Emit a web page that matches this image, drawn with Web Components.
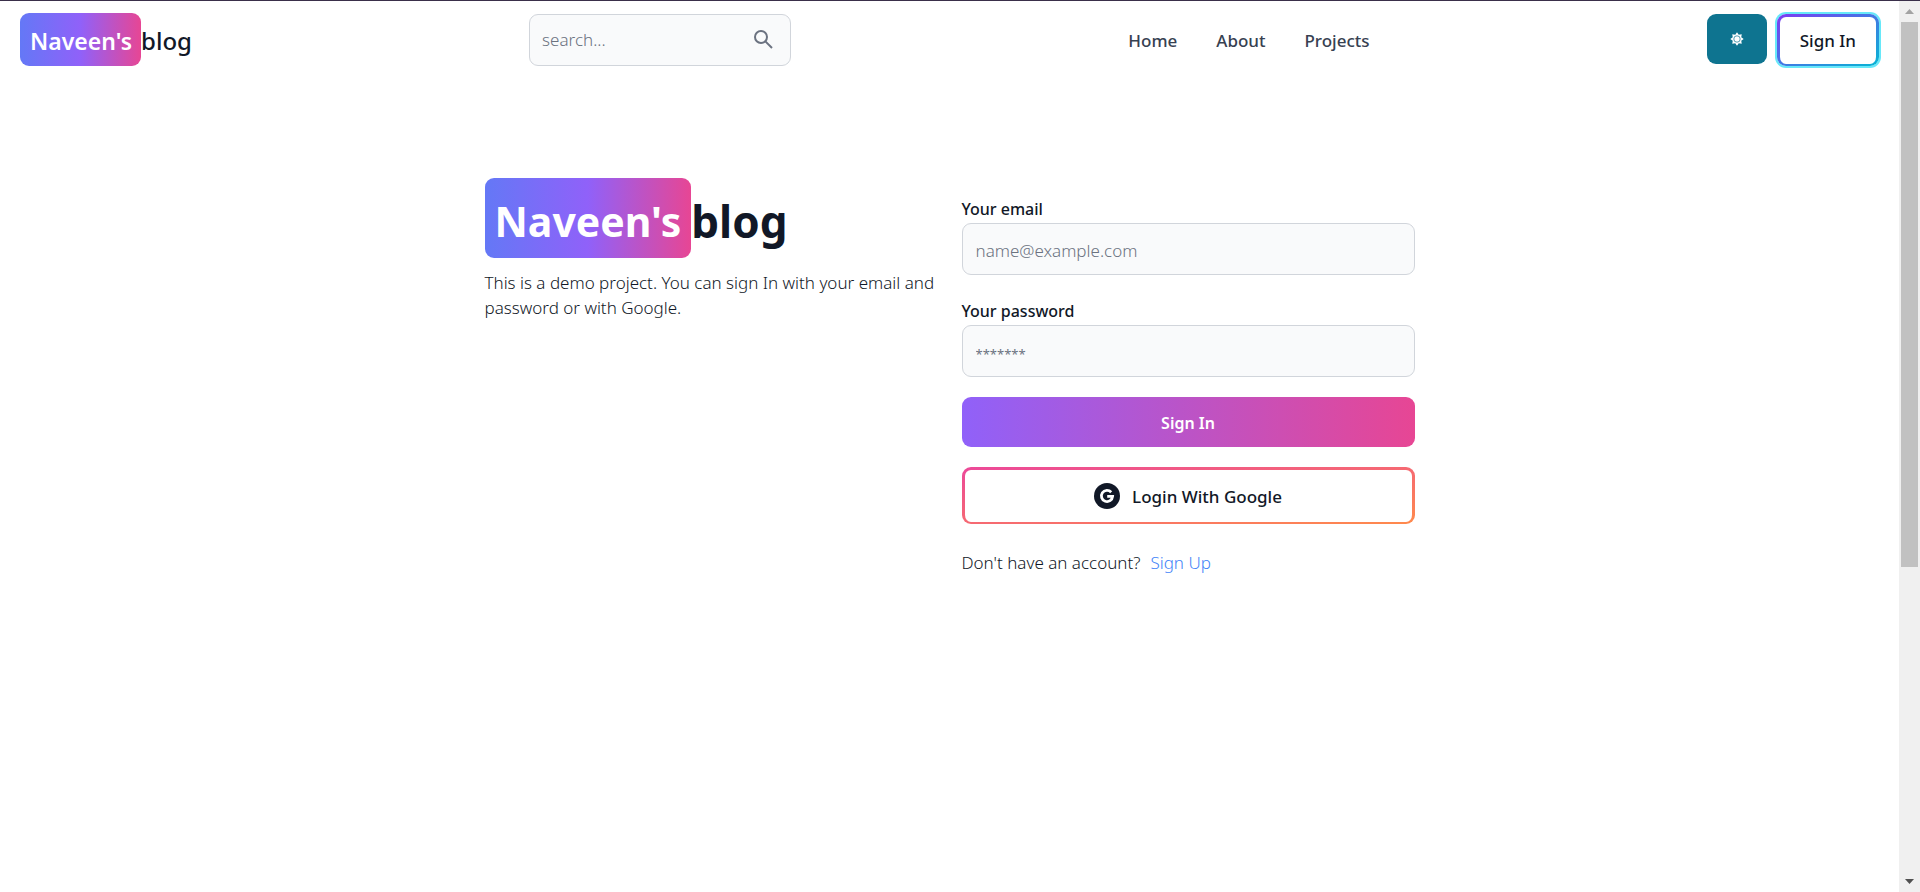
<!DOCTYPE html>
<html lang="en">
<head>
<meta charset="utf-8">
<title>Naveen's blog</title>
<style>
  html, body { margin: 0; }
  body { font: 300 17px/25px "Noto Sans", "Open Sans", sans-serif; color: #111827; background: #fff; }
</style>
</head>
<body>
<blog-page></blog-page>
<script>
const BASE = `*, *::before, *::after { box-sizing: border-box; } a { color: inherit; text-decoration: none; } button, input { font: inherit; color: inherit; margin: 0; } button { cursor: pointer; }`;

function define(name, css, html, setup) {
  customElements.define(name, class extends HTMLElement {
    constructor() {
      super();
      const root = this.attachShadow({ mode: 'open' });
      root.innerHTML = `<style>${BASE}${css}</style>${html}`;
    }
    connectedCallback() {
      if (setup) setup(this.shadowRoot, this);
    }
  });
}

define('blog-logo', `
  :host { display: block; font-size: 24px; line-height: 32px; font-weight: 500; white-space: nowrap; }
  a { display: flex; align-items: stretch; width: max-content; }
  span { padding: 12px 0 9px; }
  .tag { padding-left: 10px; padding-right: 9px; border-radius: 9px; color: #fff; font-size: 23px; font-weight: 600;
    background: linear-gradient(to right, #6478f6, #9061f9, #e74694); }
  :host([large]) { font-size: 44px; line-height: 60px; font-weight: 700; }
  :host([large]) .tag { padding-right: 10px; font-size: 41px; font-weight: 700; }
  :host([large]) span { padding-top: 13px; padding-bottom: 7px; }
`, `<a href="#"><span class="tag">Naveen's</span><span>blog</span></a>`);

define('search-box', `
  :host { display: block; width: 262px; }
  label { display: flex; align-items: center; height: 52px; padding: 0 17px 0 12px;
    border: 1px solid #d1d5db; border-radius: 9px; background: #f9fafb; color: #6b7280; }
  input { flex: 1; min-width: 0; border: 0; padding: 0; background: none; outline: 0; }
  input::placeholder { color: #6b7280; opacity: 1; }
  svg { flex: none; }
`, `<label><input type="text" placeholder="search..." aria-label="Search">
  <svg width="20" height="20" viewBox="0 0 20 20" fill="none" stroke="currentColor" stroke-width="2"><circle cx="8" cy="7" r="6"/><path d="M12.4 11.4 19 18"/></svg></label>`);

define('top-nav', `
  :host { display: block; font-weight: 500; color: #374151; }
  nav { display: flex; gap: 39px; padding-top: 2px; }
`, `<nav><a href="#">Home</a><a href="#">About</a><a href="#">Projects</a></nav>`);

define('theme-toggle', `
  :host { display: block; }
  button { display: flex; align-items: center; justify-content: center; width: 60px; height: 50px; padding: 0;
    border: 0; border-radius: 9px; background: #0e7490; }
`, `<button type="button" aria-label="Toggle theme"><svg width="14" height="14" viewBox="-7 -7 14 14"><path fill="#fff"/><circle r="3.2" fill="none" stroke="#0e7490" stroke-width=".7"/></svg></button>`,
root => {
  const points = Array.from({ length: 16 }, (_, i) => {
    const angle = i * Math.PI / 8, r = i % 2 ? 4.6 : 6.7;
    return (r * Math.sin(angle)).toFixed(2) + ' ' + (-r * Math.cos(angle)).toFixed(2);
  });
  root.querySelector('path').setAttribute('d', 'M' + points.join('L') + 'Z');
});

define('outline-button', `
  :host { display: block; font-weight: 500; --from: #7e3af2; --to: #06b6d4; --height: 52px; }
  button { display: flex; align-items: center; justify-content: center; gap: 12px; width: 100%; height: var(--height);
    padding: 0 20px; border: solid transparent; border-width: 3px 3px 2px; border-radius: 9px;
    background: linear-gradient(#fff, #fff) padding-box, linear-gradient(to bottom right, var(--from), var(--to)) border-box; }
  :host([ring]) button { box-shadow: 0 0 0 2px #67e8f9; }
  :host([warm]) { --from: #ec4899; --to: #ff8a4c; --height: 57px; }
`, `<button type="button"><slot name="icon"></slot><slot></slot></button>`);

define('solid-button', `
  :host { display: block; font-weight: 600; }
  button { display: block; width: 100%; height: 50px; padding: 2px 0 0; border: 0; border-radius: 9px; color: #fff; font-size: 16px;
    background: linear-gradient(to right, #9061f9, #e74694); }
`, `<button type="submit"><slot></slot></button>`);

define('text-field', `
  :host { display: block; }
  label { display: block; font-size: 16px; line-height: 27px; font-weight: 500; }
  input { display: block; width: 100%; height: 52px; padding: 2px 13px 0; border: 1px solid #d1d5db; border-radius: 9px;
    background: #f9fafb; outline: 0; }
  input::placeholder { color: #6b7280; opacity: 1; }
  input[type=password]::placeholder { font-size: 13px; font-weight: 400; }
`, `<label for="field"><slot></slot></label><input id="field">`,
(root, host) => {
  const input = root.querySelector('input');
  input.type = host.getAttribute('type');
  input.placeholder = host.getAttribute('placeholder');
});

define('site-header', `
  :host { display: block; }
  header { display: flex; align-items: center; justify-content: space-between; padding: 12px 20px; }
  .actions { display: flex; align-items: flex-start; gap: 10px; }
`, `<header><blog-logo></blog-logo><search-box></search-box><top-nav></top-nav>
  <div class="actions"><theme-toggle></theme-toggle><outline-button ring>Sign In</outline-button></div></header>`);

define('sign-in-form', `
  :host { display: block; }
  form { display: flex; flex-direction: column; gap: 20px; }
  .fields { display: flex; flex-direction: column; gap: 23px; }
  p { margin: 25px 0 0; display: flex; gap: 10px; line-height: 27px; }
  p a { color: #3f83f8; }
  svg { display: block; }
`, `<form>
    <div class="fields">
      <text-field type="email" placeholder="name@example.com">Your email</text-field>
      <text-field type="password" placeholder="*******">Your password</text-field>
    </div>
    <solid-button>Sign In</solid-button>
    <outline-button warm><svg slot="icon" width="26" height="26" viewBox="0 0 26 26"><circle cx="13" cy="13" r="13" fill="#111827"/><path d="M17.2 9.2A5.6 5.6 0 1 0 18.6 13.4H13.2" fill="none" stroke="#fff" stroke-width="2.8"/></svg>Login With Google</outline-button>
  </form>
  <p><span>Don't have an account?</span><a href="#">Sign Up</a></p>`);

define('sign-in-view', `
  :host { display: block; padding: 100px 20px 40px; }
  main { display: grid; grid-template-columns: 1fr 1fr; gap: 24px; max-width: 930px; margin: 0 auto; }
  p { margin: 12px 0 0; }
  sign-in-form { margin-top: 18px; }
`, `<main><section><blog-logo large></blog-logo><p>This is a demo project. You can sign In with your email and password or with Google.</p></section>
  <sign-in-form></sign-in-form></main>`);

define('scroll-rail', `
  :host { display: flex; flex-direction: column; width: 21px; background: #f0f0f0; }
  .end { flex: none; display: grid; place-items: center; height: 21px; }
  .thumb { flex: 545; margin: 0 2px; background: #c1c1c1; }
  .rest { flex: 304; }
`, `<div class="end"><svg width="9" height="5" viewBox="0 0 9 5"><path d="M0 5 4.5 0 9 5Z" fill="#a3a3a3"/></svg></div>
  <div class="thumb"></div><div class="rest"></div>
  <div class="end"><svg width="9" height="5" viewBox="0 0 9 5"><path d="M0 0 4.5 5 9 0Z" fill="#505050"/></svg></div>`);

define('blog-page', `
  :host { display: flex; box-sizing: border-box; min-height: 100vh; border-top: 1px solid #3a2f4a; }
  .content { flex: 1; min-width: 0; }
`, `<div class="content"><site-header></site-header><sign-in-view></sign-in-view></div><scroll-rail aria-hidden="true"></scroll-rail>`);
</script>
</body>
</html>
